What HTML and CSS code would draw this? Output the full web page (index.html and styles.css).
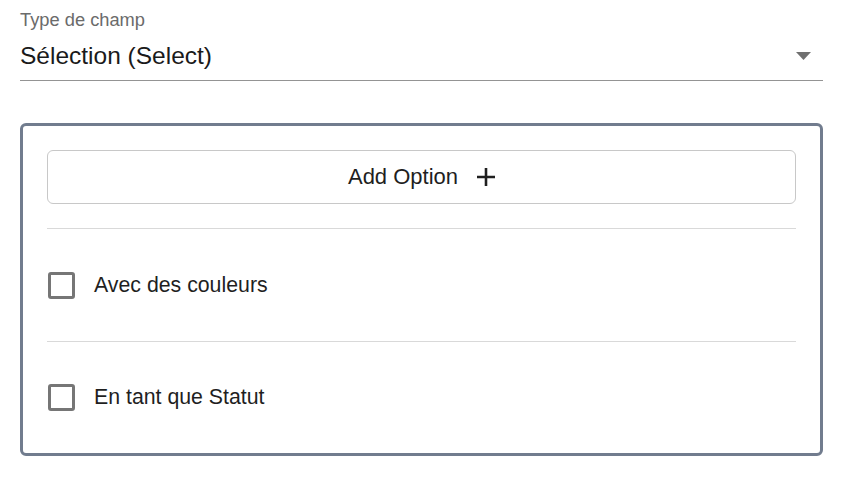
FILE: index.html
```html
<!DOCTYPE html>
<html lang="fr">
<head>
<meta charset="utf-8">
<title>Type de champ</title>
<link rel="stylesheet" href="styles.css">
</head>
<body>
<div class="page">
  <div class="field">
    <div class="field-label">Type de champ</div>
    <div class="select">
      <span class="select-value">Sélection (Select)</span>
      <svg class="arrow" width="15" height="8" viewBox="7 10 10 5" preserveAspectRatio="none"><path d="M7 10l5 5 5-5z" fill="#707070"/></svg>
    </div>
  </div>
  <div class="card">
    <button class="add-btn" type="button">
      <span>Add Option</span>
      <svg class="plus" width="18" height="18" viewBox="5 5 14 14"><path d="M19 13h-6v6h-2v-6H5v-2h6V5h2v6h6v2z" fill="#1f1f1f"/></svg>
    </button>
    <div class="divider"></div>
    <label class="row">
      <span class="checkbox"></span>
      <span class="row-label">Avec des couleurs</span>
    </label>
    <div class="divider"></div>
    <label class="row row-last">
      <span class="checkbox"></span>
      <span class="row-label">En tant que Statut</span>
    </label>
  </div>
</div>
</body>
</html>
```
FILE: styles.css
```css
html, body {
  margin: 0;
  padding: 0;
  background: #ffffff;
}

body {
  font-family: "Liberation Sans", Arial, sans-serif;
  color: #1f1f1f;
}

.page {
  padding: 11px 21px 0 20px;
}

.field-label {
  font-size: 18.3px;
  line-height: 18px;
  color: #6b6b6b;
}

.select {
  display: flex;
  align-items: center;
  justify-content: space-between;
  margin-top: 15px;
  padding-bottom: 12px;
  padding-right: 12px;
  border-bottom: 1px solid #949494;
}

.select-value {
  font-size: 24.5px;
  line-height: 24px;
  color: #1a1a1a;
}

.arrow {
  display: block;
}

.card {
  margin-top: 42px;
  border: 3px solid #717c8e;
  border-radius: 6px;
  padding: 24px 24px 0 24px;
}

.add-btn {
  display: flex;
  align-items: center;
  justify-content: center;
  width: 100%;
  height: 54px;
  box-sizing: border-box;
  border: 1px solid #c8c8c8;
  border-radius: 6px;
  background: #ffffff;
  font-family: "Liberation Sans", Arial, sans-serif;
  font-size: 22px;
  color: #1f1f1f;
  padding: 0;
}

.plus {
  display: block;
  margin-left: 19px;
}

.divider {
  height: 1px;
  background: #d9d9d9;
}

.add-btn + .divider {
  margin-top: 24px;
}

.row {
  display: flex;
  align-items: center;
  height: 112px;
}

.row-last {
  height: 111px;
}

.checkbox {
  width: 27px;
  height: 27px;
  box-sizing: border-box;
  border: 3px solid #767676;
  border-radius: 3px;
  margin-left: 1px;
}

.row-label {
  margin-left: 19px;
  font-size: 21.3px;
  color: #1f1f1f;
}
```
